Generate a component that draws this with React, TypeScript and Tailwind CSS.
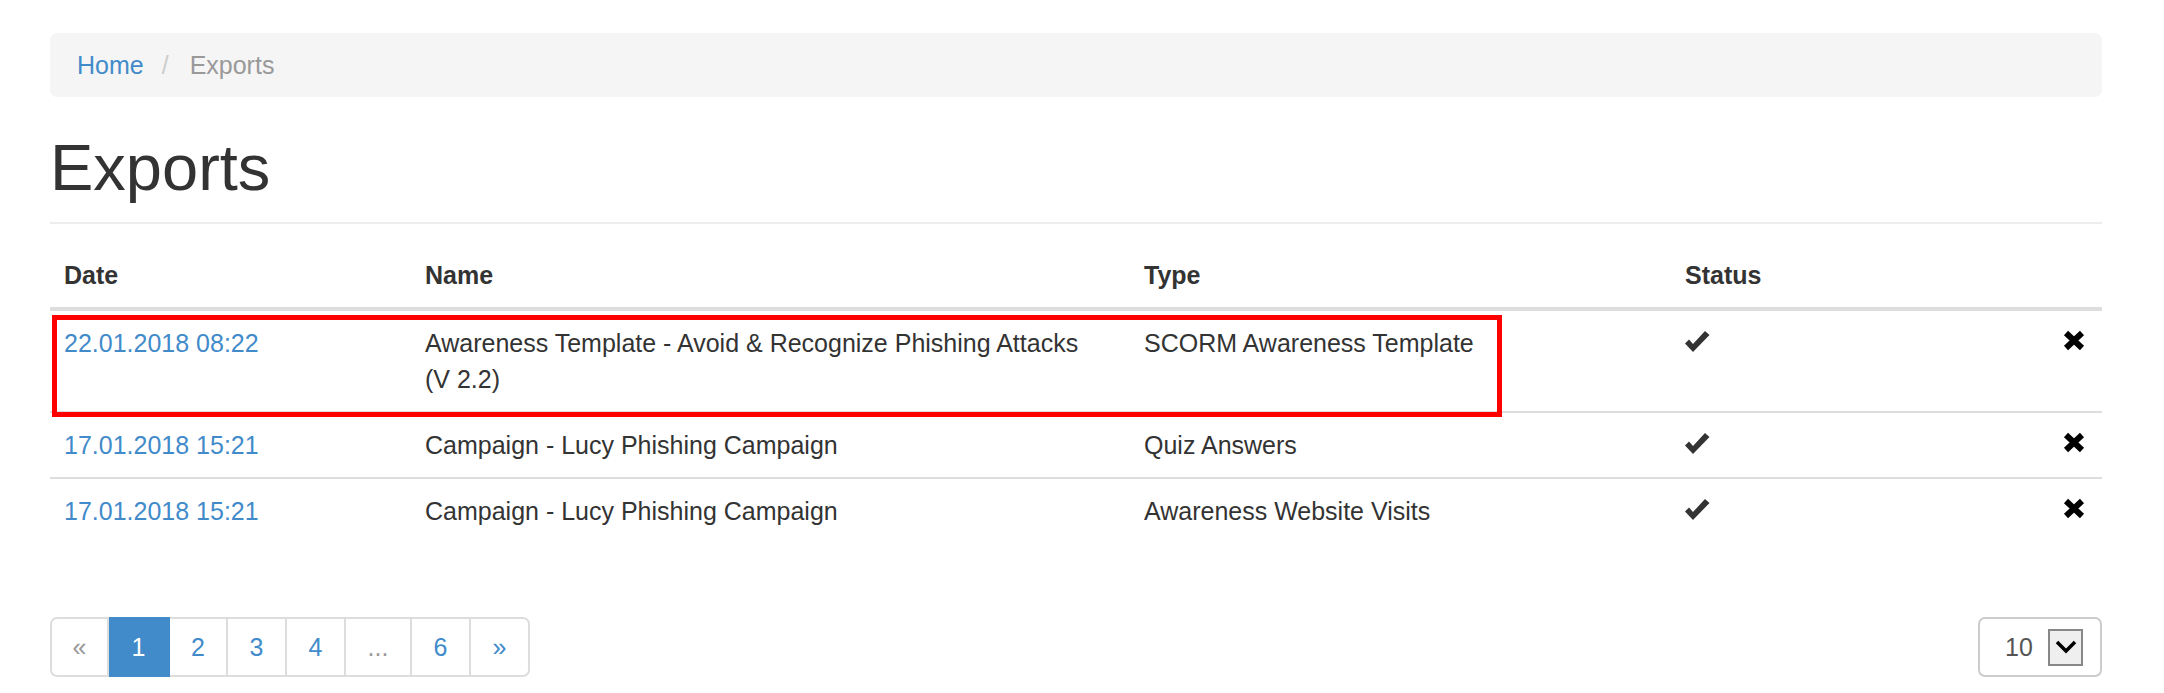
import React from 'react';

type ExportRow = {
  date: string;
  name: string;
  type: string;
};

const rows: ExportRow[] = [
  {
    date: '22.01.2018 08:22',
    name: 'Awareness Template - Avoid & Recognize Phishing Attacks (V\u00a02.2)',
    type: 'SCORM Awareness Template',
  },
  { date: '17.01.2018 15:21', name: 'Campaign - Lucy Phishing Campaign', type: 'Quiz Answers' },
  { date: '17.01.2018 15:21', name: 'Campaign - Lucy Phishing Campaign', type: 'Awareness Website Visits' },
];

const OkIcon: React.FC = () => (
  <svg width="25" height="36" viewBox="0 0 25 36" className="block">
    <polygon points="0,18.5 4,14.5 8,19 20,6 24.5,10 8,27" fill="#333" />
  </svg>
);

const RemoveIcon: React.FC = () => (
  <svg width="22" height="36" viewBox="0 0 22 36" className="block">
    <path d="M3 8 L19 23 M19 8 L3 23" stroke="#000" strokeWidth="6" />
  </svg>
);

const pages = [
  { label: '«', w: 'w-[59px]', muted: true },
  { label: '1', w: 'w-[61px]', active: true },
  { label: '2', w: 'w-[58px]' },
  { label: '3', w: 'w-[59px]' },
  { label: '4', w: 'w-[59px]' },
  { label: '...', w: 'w-[66px]', muted: true },
  { label: '6', w: 'w-[59px]' },
  { label: '»', w: 'w-[59px]' },
];

export default function App() {
  return (
    <div className="min-h-screen bg-white pl-[50px] pr-[62px] pt-[33px] font-['Liberation_Sans',Arial,sans-serif] text-[25px] leading-[36px] text-[#333]">
      {/* breadcrumb */}
      <nav className="flex h-[64px] items-center rounded-[7px] bg-[#f5f5f5] px-[27px]">
        <a href="#" className="text-[#428bca]">Home</a>
        <span className="ml-[18px] text-[#ccc]">/</span>
        <span className="ml-[21px] text-[#999]">Exports</span>
      </nav>

      <h1 className="mt-[36px] border-b-2 border-[#eee] pb-[19px] text-[65px] leading-[70px] font-normal">
        Exports
      </h1>

      <div className="relative mt-[19px]">
        <table className="w-full table-fixed border-separate border-spacing-0 text-left">
          <colgroup>
            <col className="w-[361px]" />
            <col className="w-[719px]" />
            <col className="w-[541px]" />
            <col className="w-[378px]" />
            <col />
          </colgroup>
          <thead>
            <tr>
              <th className="border-b-4 border-[#ddd] p-[14px] font-bold">Date</th>
              <th className="border-b-4 border-[#ddd] p-[14px] font-bold">Name</th>
              <th className="border-b-4 border-[#ddd] p-[14px] font-bold">Type</th>
              <th className="border-b-4 border-[#ddd] p-[14px] font-bold">Status</th>
              <th className="border-b-4 border-[#ddd] p-[14px]"></th>
            </tr>
          </thead>
          <tbody>
            {rows.map((row, i) => {
              const cell = i === 0 ? 'p-[14px] align-top' : 'border-t-2 border-[#ddd] p-[14px] align-top';
              return (
                <tr key={i}>
                  <td className={cell}>
                    <a href="#" className="text-[#428bca]">{row.date}</a>
                  </td>
                  <td className={cell}>{row.name}</td>
                  <td className={cell}>{row.type}</td>
                  <td className={cell}>
                    <OkIcon />
                  </td>
                  <td className={cell}>
                    <RemoveIcon />
                  </td>
                </tr>
              );
            })}
          </tbody>
        </table>

        {/* highlight annotation */}
        <div className="pointer-events-none absolute left-[2px] top-[72px] h-[102px] w-[1450px] border-[5px] border-[#ff0000]" />
      </div>

      <div className="mt-[74px] flex items-center justify-between">
        <ul className="flex">
          {pages.map((p, i) => (
            <li
              key={i}
              className={[
                'flex h-[60px] items-center justify-center border-y-2 border-r-2',
                p.w,
                i === 0 ? 'rounded-l-[7px] border-l-2' : '',
                i === pages.length - 1 ? 'rounded-r-[7px]' : '',
                p.active
                  ? 'border-[#428bca] bg-[#428bca] text-white'
                  : p.muted
                    ? 'border-[#ddd] text-[#999]'
                    : 'border-[#ddd] text-[#428bca]',
              ].join(' ')}
            >
              {p.label}
            </li>
          ))}
        </ul>

        <div className="flex h-[60px] w-[124px] items-center rounded-[7px] border-2 border-[#ccc] pl-[25px] pr-[17px]">
          <span className="text-[#555]">10</span>
          <span className="ml-auto flex h-[37px] w-[35px] items-center justify-center border-2 border-[#888] bg-[#efefef]">
            <svg width="22" height="14" viewBox="0 0 22 14">
              <path d="M2 2 L11 11 L20 2" stroke="#000" strokeWidth="3.5" fill="none" />
            </svg>
          </span>
        </div>
      </div>
    </div>
  );
}
